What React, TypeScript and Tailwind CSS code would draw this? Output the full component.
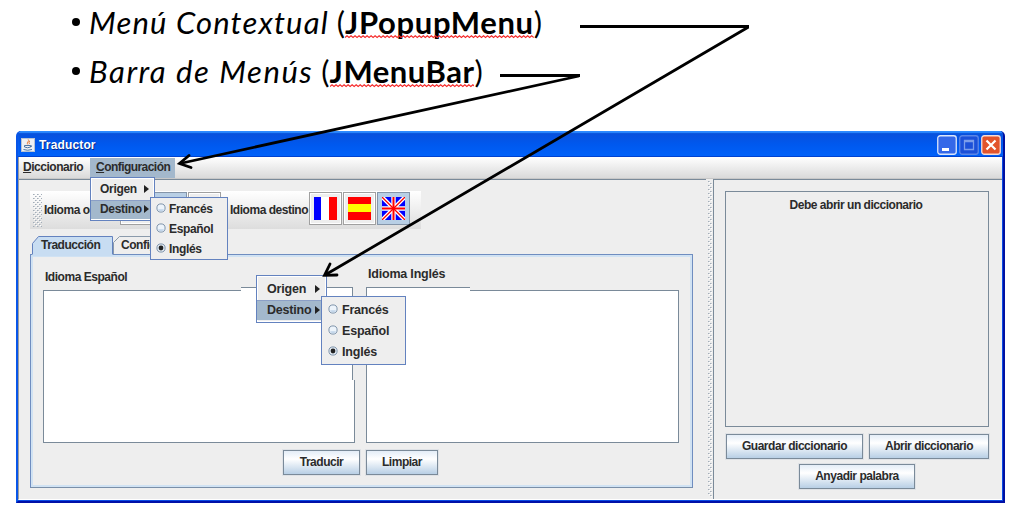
import type { ReactNode } from "react";

function Squiggle({ width }: { width: number }) {
  let d = "M0 2.5";
  for (let x = 2; x <= width; x += 2) d += ` L${x} ${x % 4 === 2 ? 0.8 : 2.5}`;
  return (
    <svg className="absolute bottom-[3px] left-0 h-[4px] w-full" viewBox={`0 0 ${width} 4`} preserveAspectRatio="none">
      <path d={d} fill="none" stroke="#f52a2a" strokeWidth="1.1" />
    </svg>
  );
}

function Bullet({ italic, bold, width, tracking, boldTracking }: { italic: string; bold: string; width: number; tracking: string; boldTracking: string }) {
  return (
    <li className="flex h-[49px] items-center whitespace-pre">
      <span className="mr-[9px] size-[8px] rounded-full bg-black" />
      <span className={`italic ${tracking}`}>{italic}</span>
      <span className="ml-[8px]">(</span>
      <span className={`relative font-bold ${boldTracking}`}>
        {bold}
        <Squiggle width={width} />
      </span>
      <span>)</span>
    </li>
  );
}

function Dots({ id, className }: { id: string; className: string }) {
  return (
    <svg className={className}>
      <defs>
        <pattern id={id} width="4" height="4" patternUnits="userSpaceOnUse">
          <path d="M0 0h1v1h-1zM2 2h1v1h-1z" fill="#a2adb9" />
          <path d="M1 1h1v1h-1zM3 3h1v1h-1z" fill="#ffffff" />
          <path d="M1 0h1v1h-1zM3 2h1v1h-1z" fill="#c6cbd0" />
        </pattern>
      </defs>
      <rect width="100%" height="100%" fill={`url(#${id})`} />
    </svg>
  );
}

function Button({ children, className }: { children: ReactNode; className: string }) {
  return (
    <button
      className={`h-[25px] border border-[#7a8a99] bg-linear-to-b from-[#e4edf7] via-white via-35% to-[#b8cfe5] pb-px font-bold shadow-[0_0_0_1px_#dfe2e6] ${className}`}
    >
      {children}
    </button>
  );
}

function ToolButton({ selected, children }: { selected?: boolean; children?: ReactNode }) {
  return (
    <div
      className={`flex size-[33px] items-center justify-center border ${selected ? "border-[#8495a9] bg-[#b8cfe5]" : "border-[#a0a0a0] bg-[#eeeeee] shadow-[inset_0_0_0_1px_#fff]"}`}
    >
      {children}
    </div>
  );
}

function France() {
  return (
    <svg className="size-[23px]" viewBox="0 0 23 23">
      <path d="M0 0h23v23H0z" fill="#fff" />
      <path d="M0 0h7v23H0z" fill="#0000ff" />
      <path d="M15 0h8v23h-8z" fill="#ff0000" />
    </svg>
  );
}

function Spain() {
  return (
    <svg className="size-[23px]" viewBox="0 0 23 23">
      <path d="M0 0h23v23H0z" fill="#ff0000" />
      <path d="M0 7h23v8H0z" fill="#ffff00" />
    </svg>
  );
}

function Britain() {
  return (
    <svg className="size-[23px]" viewBox="0 0 23 23">
      <path d="M0 0h23v23H0z" fill="#0000ff" />
      <path d="M0 0L23 23M23 0L0 23" stroke="#fff" strokeWidth="4" />
      <path d="M11.5 0v23M0 11.5h23" stroke="#fff" strokeWidth="4.4" />
      <path d="M0 0L23 23M23 0L0 23" stroke="#ff0000" strokeWidth="1.3" />
      <path d="M11.5 0v23M0 11.5h23" stroke="#ff0000" strokeWidth="2" />
    </svg>
  );
}

function Radio({ checked }: { checked?: boolean }) {
  return (
    <svg className="mb-[2px] size-[10px]" viewBox="0 0 10 10">
      <circle cx="5" cy="5" r="4.1" fill={checked ? "#e3ebf3" : "#edf4fb"} stroke="#7f95ac" />
      {checked ? <circle cx="5" cy="5" r="2.4" fill="#222" /> : <path d="M2 6.2h6a3.2 3.2 0 0 1-6 0z" fill="#c2d6ea" />}
    </svg>
  );
}

function Arrow() {
  return (
    <svg className="h-[8px] w-[5px]" viewBox="0 0 5 8">
      <path d="M0 0l5 4l-5 4z" fill="#222" />
    </svg>
  );
}

function RadioItem({ label, checked, className }: { label: string; checked?: boolean; className: string }) {
  return (
    <div className={`flex items-center ${className}`}>
      <Radio checked={checked} />
      <span>{label}</span>
    </div>
  );
}

export default function App() {
  return (
    <div className="relative flex h-[510px] w-[1012px] flex-col overflow-hidden bg-white font-['Liberation_Sans',sans-serif] text-[12px] leading-[14px] font-bold tracking-[-0.47px] whitespace-nowrap text-[#2b2b2b]">
      <ul className="-mt-[3px] h-[134px] shrink-0 pl-[72px] font-['Lato',sans-serif] text-[31px] leading-[40px] font-normal tracking-normal text-black">
        <Bullet italic="Menú Contextual" bold="JPopupMenu" width={188} tracking="tracking-[1.15px]" boldTracking="tracking-[0.65px]" />
        <Bullet italic="Barra de Menús" bold="JMenuBar" width={144} tracking="tracking-[1.55px]" boldTracking="tracking-[0.5px]" />
      </ul>

      <div className="ml-[16px] flex h-[372px] w-[989px] shrink-0 flex-col overflow-hidden rounded-t-[5px] border-x-2 border-t-0 border-b-2 border-r-[#0010a0] border-b-[#0010a8] border-l-[#0855e8] bg-[#0a4be4]">
        <div className="flex h-[26px] shrink-0 items-center bg-linear-to-b from-[#0a4fd8] via-[#0058ee] to-[#0062fa] pr-px pl-[3px] shadow-[inset_0_2px_1px_#2d8bff,inset_0_-1px_#0042d0]">
          <svg className="mt-[2px] size-[14px]" viewBox="0 0 14 14">
            <rect width="14" height="14" fill="#eef0f4" />
            <rect x=".5" y=".5" width="13" height="13" fill="none" stroke="#b9c3d2" />
            <path d="M7.2 1.5c2 1.6-2.4 2.6-.3 5M9 3c-1.8 1.2-.9 1.9-.3 3" fill="none" stroke="#e8742c" />
            <path d="M3.5 7.5h6v1.5q-3 1.5-6 0zM9.5 7.5q2.5 0 0 1.8M2.5 11.5q4 1.5 8.5 0" fill="none" stroke="#4d76a5" />
          </svg>
          <span className="mt-[2px] ml-[4px] flex-1 text-[12px] tracking-[0.15px] text-white [text-shadow:1px_1px_#0a2a8a]">Traductor</span>
          <div className="mt-px flex gap-[2px]">
            <svg className="size-[20px]" viewBox="0 0 20 20">
              <rect x=".75" y=".75" width="18.5" height="18.5" rx="2.5" fill="#3568e8" stroke="#dce6fa" strokeWidth="1.3" />
              <path d="M5 13h7v3H5z" fill="#fff" />
            </svg>
            <svg className="size-[20px]" viewBox="0 0 20 20">
              <rect x=".75" y=".75" width="18.5" height="18.5" rx="2.5" fill="#1c50d8" stroke="#5c86e6" strokeWidth="1.3" />
              <path d="M5.5 5.5h9v9h-9zM5 6.5h10" fill="none" stroke="#7c9dea" strokeWidth="1.3" />
            </svg>
            <svg className="mr-px size-[20px]" viewBox="0 0 20 20">
              <rect x=".75" y=".75" width="18.5" height="18.5" rx="2.5" fill="#e2542c" stroke="#f6dcd6" strokeWidth="1.3" />
              <path d="M5.5 5.5l9 9M14.5 5.5l-9 9" stroke="#fff" strokeWidth="2.2" />
            </svg>
          </div>
        </div>

        <div className="mr-px mb-px flex min-h-0 flex-1 flex-col border-b border-l border-b-white border-l-[#9d9d9d] bg-[#eeeeee]">
          <div className="flex h-[22px] shrink-0 items-center border-b border-[#c8c8c8] bg-linear-to-b from-white to-[#dadada]">
            <span className="mb-px ml-[4px] w-[67px]"><u>D</u>iccionario</span>
            <span className="flex h-[20px] w-[85px] items-center bg-[#a3b8cc] pb-px pl-[6px] tracking-[-0.55px]"><span><u>C</u>onfiguración</span></span>
          </div>

          <div className="flex min-h-0 flex-1">
            <div className="w-[687px] shrink-0 border-t border-[#7a8a99] pl-[11px]">
              <div className="mt-[11px] flex h-[38px] w-[391px] items-center bg-linear-to-b from-white to-[#dddddd]">
                <Dots id="grip" className="ml-[3px] h-[33px] w-[9px]" />
                <span className="ml-[2px] w-[76px]">Idioma origen</span>
                <div className="mb-[3px] flex gap-px">
                  <ToolButton><France /></ToolButton>
                  <ToolButton selected><Spain /></ToolButton>
                  <ToolButton><Britain /></ToolButton>
                </div>
                <span className="ml-[9px] w-[79px]">Idioma destino</span>
                <div className="mb-[3px] flex gap-px">
                  <ToolButton><France /></ToolButton>
                  <ToolButton><Spain /></ToolButton>
                  <ToolButton selected><Britain /></ToolButton>
                </div>
              </div>

              <div className="mt-[7px] flex h-[18px] pl-px">
                <div className="relative w-[82px] pt-[2px] pl-[10px]">
                  <svg className="absolute top-0 left-0 h-[20px] w-[82px]" viewBox="0 0 82 20">
                    <path d="M1.5 20V7.5L7.5.5H81.5V20z" fill="#c8ddf2" />
                    <path d="M1.5 18V7.5L7.5.5H81.5V18" fill="none" stroke="#6382bf" />
                  </svg>
                  <span className="relative">Traducción</span>
                </div>
                <div className="relative w-[100px] pt-[2px] pl-[8px]">
                  <svg className="absolute top-0 left-0 h-[18px] w-[100px]" viewBox="0 0 100 18">
                    <path d="M.5 18V6.5L6.5.5H99.5V18" fill="none" stroke="#8a9aab" />
                  </svg>
                  <span className="relative">Configuración</span>
                </div>
              </div>

              <div className="h-[234px] w-[663px] border border-[#6f8dc0] border-b-[#7a8fa8] shadow-[inset_0_0_0_2px_#d0e2f3]">
                <div className="flex h-[35px] items-end pl-[14px]">
                  <span className="mb-[6px] w-[323px]">Idioma Español</span>
                  <span className="mb-[9px] text-[12.5px] tracking-[-0.2px]">Idioma Inglés</span>
                </div>
                <div className="ml-[12px] flex gap-[11px]">
                  <div className="h-[153px] w-[312px] border border-[#7a8a99] bg-white" />
                  <div className="h-[153px] w-[313px] border border-[#7a8a99] bg-white" />
                </div>
                <div className="mt-[7px] ml-[252px] flex gap-[6px]">
                  <Button className="w-[77px]">Traducir</Button>
                  <Button className="w-[72px]">Limpiar</Button>
                </div>
              </div>
            </div>

            <Dots id="divider" className="mt-[2px] ml-[2px] h-[316px] w-[4px]" />

            <div className="ml-px flex-1 border-t border-l border-[#7a8a99] pl-[11px]">
              <div className="mt-[11px] h-[236px] w-[264px] border border-[#7a8a99] pt-[6px] pr-[2px] text-center">Debe abrir un diccionario</div>
              <div className="mt-[7px] flex gap-[6px] pl-px">
                <Button className="w-[137px]">Guardar diccionario</Button>
                <Button className="w-[120px]">Abrir diccionario</Button>
              </div>
              <div className="mt-[5px] pl-[74px]">
                <Button className="w-[116px]">Anyadir palabra</Button>
              </div>
            </div>
          </div>
        </div>
      </div>

      <div className="absolute top-[287px] left-[241px] flex h-[93px] w-[229px]">
        <div className="w-[112px] border-t border-r border-[#7a8a99] bg-white" />
        <div className="w-[13px] bg-[#eeeeee]" />
        <div className="flex-1 border-t border-l border-[#7a8a99] bg-white" />
      </div>

      <div className="absolute top-[177px] left-[90px] h-[44px] w-[65px] border border-[#6382bf] bg-[#eeeeee] tracking-[-0.3px] shadow-[inset_0_0_0_1px_#fff]">
        <div className="flex h-[22px] items-center justify-between pr-[5px] pl-[9px]"><span>Origen</span><Arrow /></div>
        <div className="flex h-[19px] items-center justify-between border-t border-[#8b9fc6] bg-[#a3b8cc] pr-[5px] pb-[2px] pl-[9px]"><span>Destino</span><Arrow /></div>
      </div>
      <div className="absolute top-[197px] left-[150px] h-[63px] w-[78px] border border-[#6382bf] bg-[#eeeeee] pt-px pl-[5px] tracking-[-0.35px]">
        <RadioItem label="Francés" className="h-[20px] gap-[3px]" />
        <RadioItem label="Español" className="h-[20px] gap-[3px]" />
        <RadioItem label="Inglés" checked className="h-[20px] gap-[3px]" />
      </div>

      <div className="absolute top-[275px] left-[256px] h-[48px] w-[71px] border border-[#6382bf] bg-[#eeeeee] text-[12.5px] tracking-[-0.2px] shadow-[inset_0_0_0_1px_#fff]">
        <div className="flex h-[24px] items-center justify-between pt-[2px] pr-[6px] pl-[10px]"><span>Origen</span><Arrow /></div>
        <div className="flex h-[20px] items-center justify-between border-t border-[#8b9fc6] bg-[#a3b8cc] pr-[6px] pb-px pl-[10px]"><span>Destino</span><Arrow /></div>
      </div>
      <div className="absolute top-[296px] left-[321px] h-[69px] w-[85px] border border-[#6382bf] bg-[#eeeeee] pt-[2px] pl-[6px] text-[12.5px] tracking-[-0.2px]">
        <RadioItem label="Francés" className="h-[21px] gap-[4px]" />
        <RadioItem label="Español" className="h-[21px] gap-[4px]" />
        <RadioItem label="Inglés" checked className="h-[21px] gap-[4px]" />
      </div>

      <svg className="absolute top-0 left-0 h-[510px] w-[1012px]" viewBox="0 0 1012 510" fill="none" stroke="#000">
        <path d="M580 26.5H749M500 75.5H580" strokeWidth="2.8" />
        <path d="M748.5 27L325 275M579 76L180 163.5" strokeWidth="2.8" />
        <path d="M330 264L324.5 275.3L337 275M189 155.5L179.5 163.5L191 167.5" strokeWidth="2.8" strokeLinecap="round" />
      </svg>
    </div>
  );
}
